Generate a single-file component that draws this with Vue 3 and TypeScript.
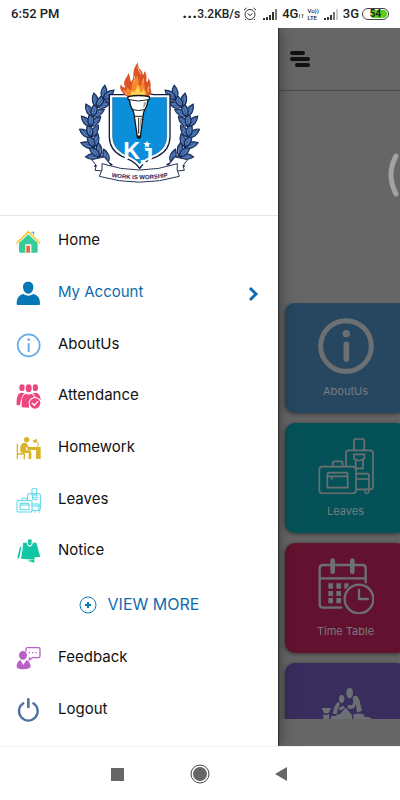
<script setup lang="ts">
interface Shape {
  d: string
  fill?: string
  stroke?: string
  width?: number
}

interface MenuItem {
  label: string
  view: string
  shapes: Shape[]
  active?: boolean
}

interface Tile {
  label?: string
  tone: string
  view: string
  shapes: Shape[]
}

const disc = (x: number, y: number, rx: number, ry: number = rx): string =>
  `M${x - rx} ${y}a${rx} ${ry} 0 1 0 ${rx * 2} 0a${rx} ${ry} 0 1 0 ${-rx * 2} 0z`

const fill = (d: string, color: string): Shape => ({ d, fill: color })
const line = (d: string, color: string, width: number): Shape => ({ d, stroke: color, width })

const mainItems: MenuItem[] = [
  {
    label: 'Home',
    view: '49 58 75 75',
    shapes: [
      fill('M58 100L86 74L114 100V125Q114 129 110 129H62Q58 129 58 125Z', '#34cc98'),
      line('M52 100L86 66L120 100', '#fcc82e', 5),
      line('M96 68L102 67V74', '#3f9fd0', 3),
      fill('M77 129V106Q77 104 79 104H93Q95 104 95 106V129Z', '#fff'),
      fill('M80 129V108H91V129Z', '#f4623c')
    ]
  },
  {
    label: 'My Account',
    view: '49 213 75 75',
    active: true,
    shapes: [
      fill('M86 215C96 215 101 221 101 230C101 242 95 251 86 251C77 251 70 242 70 230C70 221 76 215 86 215Z', '#0678b6'),
      fill('M51 282C51 264 57 256 71 252Q86 262 101 252C115 256 121 264 121 282Q121 285 118 285H54Q51 285 51 282Z', '#0678b6')
    ]
  },
  {
    label: 'AboutUs',
    view: '49 368 75 75',
    shapes: [
      line(disc(87, 405, 33), '#62ade9', 5),
      fill(disc(87, 388, 4), '#62ade9'),
      line('M87 401V423', '#62ade9', 6)
    ]
  },
  {
    label: 'Attendance',
    view: '49 43 75 75',
    shapes: [
      fill(disc(67, 54, 8, 10), '#ee477d'),
      fill(disc(107, 54, 8, 10), '#ee477d'),
      fill('M51 107C50 82 54 71 65 69L75 71Q65 78 61 107Z', '#ee477d'),
      fill('M99 71L110 69C119 72 123 81 123 91L108 84Q105 76 99 71Z', '#ee477d'),
      fill(disc(87, 56, 12, 15), '#fff'),
      fill(disc(87, 56, 9, 12), '#ee477d'),
      fill('M66 113C65 87 69 75 80 72Q87 77 94 72C102 75 106 82 107 90L90 98L88 114Z', '#ee477d'),
      fill(disc(106, 101, 19), '#fff'),
      fill(disc(106, 101, 16), '#ee477d'),
      line('M98 101L104 107L114 96', '#fff', 4)
    ]
  },
  {
    label: 'Homework',
    view: '49 198 75 75',
    shapes: [
      fill(disc(81, 209, 8), '#dab42a'),
      fill('M62 242C60 225 66 218 77 218Q83 219 87 231H97V236H83L79 229V241H91Q95 242 95 248V267H87V249H66Q62 248 62 242Z', '#dab42a'),
      line('M53 223V266M53 252H74V266', '#dab42a', 4),
      fill('M84 231H123V267H109V240H84Z', '#dab42a'),
      line('M112 231L117 224L109 212', '#dab42a', 3),
      fill('M99 212L111 206L112 216L104 219Z', '#dab42a')
    ]
  },
  {
    label: 'Leaves',
    view: '49 353 75 75',
    shapes: [
      line('M97 370V356Q97 354 99 354H109Q111 354 111 356V370M84 389V374Q84 370 88 370H118Q122 370 122 374V416Q122 420 118 420H97', '#55d5e8', 3),
      line('M96 374H112V388H99V374M99 381H109M97 401H118V420M97 407H118M106 423V426M118 423V426', '#55d5e8', 3),
      line('M55 391H94Q97 391 97 394V422Q97 425 94 425H55Q52 425 52 422V394Q52 391 55 391ZM67 391V384H83V391M62 399H88V418H62ZM62 404H88', '#55d5e8', 3)
    ]
  },
  {
    label: 'Notice',
    view: '49 508 75 75',
    shapes: [
      fill('M65 532L60 560L54 571V560L61 531Z', '#12c7a3'),
      fill('M70 519H110L122 562L105 563L104 570L64 567Q70 540 70 519Z', '#12c7a3'),
      fill('M83 573L104 570V579Z', '#12c7a3'),
      fill('M81 518H100Q98 531 90 531Q82 530 81 518Z', '#fff'),
      fill('M84 512Q91 505 97 512L95 519Q99 524 90 527Q82 524 86 519Z', '#12c7a3')
    ]
  }
]

const footItems: MenuItem[] = [
  {
    label: 'Feedback',
    view: '49 213 75 75',
    shapes: [
      line('M79 228V223Q79 218 84 218H117Q121 218 121 223V243Q121 248 116 248H98L89 255V248', '#ba5fc8', 4),
      fill('M87 231H91V235H87ZM97 231H101V235H97ZM107 231H111V235H107Z', '#ba5fc8'),
      fill(disc(70, 241, 12, 13), '#ba5fc8'),
      fill('M51 277Q51 259 62 255L71 270L80 255Q92 259 93 277Q86 283 71 283Q56 283 51 277Z', '#ba5fc8')
    ]
  },
  {
    label: 'Logout',
    view: '49 368 75 75',
    shapes: [
      line('M71 384A28 28 0 1 0 101 384', '#5172a2', 7),
      line('M86 372V395', '#5172a2', 8)
    ]
  }
]

const ink = '#6d7073'

const tiles: Tile[] = [
  {
    label: 'AboutUs',
    tone: 'blue',
    view: '142 82 168 168',
    shapes: [
      line(disc(226, 166, 76), ink, 15),
      fill(disc(227, 129, 11), ink),
      line('M227 161V205', ink, 17)
    ]
  },
  {
    label: 'Leaves',
    tone: 'teal',
    view: '142 67 168 168',
    shapes: [
      line('M250 104V75Q250 70 255 70H277Q281 70 281 75V104M226 150V112Q226 104 234 104H298Q307 104 307 112V213Q307 221 299 221H258', ink, 5),
      line('M250 116H281V127Q281 131 277 131L265 135L254 131Q250 130 250 127ZM255 133V158H277V133M258 174H288Q295 174 295 181V221M258 190H295', ink, 5),
      line(disc(289, 227, 6), ink, 4),
      line('M155 153H246Q256 153 256 163V224Q256 233 246 233H155Q146 233 146 224V163Q146 153 155 153ZM186 153V143Q186 137 192 137H210Q216 137 216 143V153M176 171H225Q231 171 231 177V216H170V177Q170 171 176 171ZM170 182H231M183 182V190', ink, 5)
    ]
  },
  {
    label: 'Time Table',
    tone: 'rose',
    view: '142 67 168 168',
    shapes: [
      line('M212 216H157Q147 216 147 206V98Q147 88 157 88H276Q285 88 285 98V140M147 128H285', ink, 7),
      line('M186 75V108M245 75V108', ink, 14),
      fill('M173 143H187V159H173ZM197 143H211V159H197ZM221 143H234V150L226 159H221ZM173 166H187V181H173ZM197 166H211V181H197ZM173 187H187V203H173ZM197 187H211V203H197Z', ink),
      line(disc(265, 190, 43), ink, 7),
      line('M265 163V190H292', ink, 7)
    ]
  },
  {
    tone: 'violet',
    view: '232 69 168 168',
    shapes: [
      fill(disc(327, 114, 10, 16), ink),
      fill(disc(303, 132, 8, 12), ink),
      fill('M243 159H271L265 172Q257 179 249 172Z', ink),
      fill('M248 177Q257 183 266 177V194H248Z', ink),
      fill('M291 142Q298 140 297 148L292 162L288 177H277Q279 152 291 142ZM295 158L308 152L313 159L297 167Z', ink),
      fill('M338 124Q351 118 357 138L364 168L349 172L345 146L341 158Q331 166 321 159V150L334 151Q341 140 336 133Z', ink),
      fill('M271 194V184Q279 182 283 184L291 178H296V194ZM296 194V179L315 158L334 180V194ZM338 194V179Q353 173 370 178V185Q388 184 397 194Z', ink)
    ]
  }
]

const stem: [number, number, number][] = [
  [112, 322, -62],
  [86, 304, -48],
  [70, 276, -28],
  [61, 246, -12],
  [60, 214, 2],
  [65, 184, 16],
  [78, 155, 32],
  [98, 132, 50]
]

const leaves = stem.flatMap(([x, y, dir]) =>
  [-44, 44, 0].map((spread) => `translate(${x} ${y}) rotate(${dir + spread})`)
)
</script>

<template>
  <div class="screen">
    <header class="status">
      <span class="clock">6:52 PM</span>
      <div class="indicators">
        <span class="speed"><b class="dots">...</b>3.2KB/s</span>
        <svg class="alarm" viewBox="0 0 14 14" aria-hidden="true">
          <circle cx="7" cy="7.5" r="5" />
          <path d="M4.5 6.5L7 8.5L9.500 6.500M1 3L3.500 1M13 3L10.500 1M3 12L2 13M11 12L12 13" />
        </svg>
        <svg class="signal" viewBox="0 0 16 12" aria-hidden="true">
          <path d="M0 10h2v2h-2zM3 9h2v3h-2zM6 7h2v5h-2zM9 4h2v8h-2z" />
          <path class="soft" d="M12 1h2v11h-2z" />
        </svg>
        <span class="net">4G<svg class="data" viewBox="0 0 6 10" aria-hidden="true"><path d="M1.500 5v4M4.500 9v-4M3.500 6h2" /></svg></span>
        <span class="volte"><span>Vo))</span><span>LTE</span></span>
        <svg class="signal" viewBox="0 0 16 12" aria-hidden="true">
          <path d="M0 10h2v2h-2zM3 9h2v3h-2zM6 7h2v5h-2z" />
          <path class="soft" d="M9 4h2v8h-2z" />
          <path class="faint" d="M12 1h2v11h-2z" />
        </svg>
        <span class="net">3G</span>
        <span class="battery"><span class="level">54</span></span>
      </div>
    </header>

    <main class="stage">
      <aside class="drawer">
        <div class="brand">
          <svg class="crest" viewBox="4 -3 405 405" role="img" aria-label="KJ school crest">
            <g v-for="side in ['left', 'right']" :key="side" :transform="side === 'right' ? 'translate(413 0) scale(-1 1)' : undefined">
              <path class="stem" d="M125 330Q58 300 60 220Q62 160 125 112" />
              <g v-for="(place, i) in leaves" :key="i" :transform="place">
                <path class="leaf" d="M0 0C-13 -11 -11 -28 0 -42C11 -28 13 -11 0 0Z" />
                <path class="vein" d="M-3 -9Q-6 -18 0 -31M4 -9Q6 -17 4 -24" />
              </g>
            </g>
            <path class="shield-edge" d="M116 119H166L176 116H238L248 119H298V246Q297 286 260 304Q220 318 207 340Q193 318 154 304Q117 286 116 246Z" />
            <path class="shield" d="M126 128H288V246Q287 279 256 296Q220 309 207 326Q193 309 158 296Q127 279 126 246Z" />
            <path class="flame-outer" d="M172 126C156 117 143 101 151 88C154 97 160 99 164 97C153 77 170 69 173 54C180 65 177 75 182 80C195 67 179 48 202 22C199 46 218 44 216 60C222 57 219 52 221 49C232 61 225 71 228 81C234 80 233 72 232 68C246 84 236 98 242 108C242 119 232 125 229 126Z" />
            <path class="flame-mid" d="M176 125C161 112 166 104 171 97C174 106 181 107 183 101C179 86 197 77 198 61C207 75 201 87 209 94C215 88 213 79 214 76C227 89 218 103 227 110C230 116 230 122 226 125Z" />
            <path class="flame-core" d="M183 125C177 117 181 110 186 107Q191 116 194 106Q201 98 199 89C209 99 205 110 213 112C219 108 217 103 217 100C226 112 224 120 219 125Z" />
            <path class="flame-line" d="M158 106Q167 110 167 120M187 83Q196 74 191 64M218 71Q220 77 216 82M234 94Q231 103 233 111M201 36Q204 48 211 57" />
            <path class="torch" d="M172 125Q204 118 236 125V132Q230 137 230 145C229 158 219 164 218 177L210 239Q211 248 205 250Q198 248 199 239L190 177C189 164 179 158 178 145Q178 137 172 132Z" />
            <path class="torch-line" d="M175 134Q204 142 233 134M187 164Q204 169 221 164M193 184H216M204 188V236" />
            <path class="torch-shade" d="M219 142H226Q225 153 218 159ZM209 188H214L207 235Z" />
            <circle class="knob" cx="205" cy="246" r="5" />
            <text class="monogram" x="158" y="311">K<tspan dy="20">J</tspan></text>
            <path class="star" d="M229 257L232 264L240 265L234 270L236 278L229 274L222 278L224 270L218 265L226 264Z" />
            <path class="ribbon" d="M63 314L101 306L121 331L96 348L73 346L77 332ZM351 314L313 306L293 331L318 348L341 346L337 332Z" />
            <path class="ribbon" d="M94 326Q207 364 320 326Q316 345 326 364Q207 399 86 364Q98 345 94 326Z" />
            <path id="motto-line" class="guide" d="M93 360Q207 386 321 360" />
            <text class="motto"><textPath href="#motto-line" startOffset="50%">WORK IS WORSHIP</textPath></text>
          </svg>
        </div>

        <nav class="menu" aria-label="Main menu">
          <a v-for="item in mainItems" :key="item.label" href="#" class="item" :class="{ active: item.active }">
            <svg class="glyph" :viewBox="item.view" aria-hidden="true">
              <path v-for="(s, i) in item.shapes" :key="i" :d="s.d" :fill="s.fill ?? 'none'" :stroke="s.stroke ?? 'none'" :stroke-width="s.width ?? 0" />
            </svg>
            <span class="label">{{ item.label }}</span>
            <svg v-if="item.active" class="chevron" viewBox="0 0 12 16" aria-hidden="true"><path d="M3 2L9 8L3 14" /></svg>
          </a>
          <button type="button" class="more">
            <svg class="plus" viewBox="0 0 18 18" aria-hidden="true">
              <circle cx="9" cy="9" r="8" />
              <path d="M9 6V12M6 9H12" />
            </svg>
            <span class="more-label">VIEW MORE</span>
          </button>
          <a v-for="item in footItems" :key="item.label" href="#" class="item">
            <svg class="glyph" :viewBox="item.view" aria-hidden="true">
              <path v-for="(s, i) in item.shapes" :key="i" :d="s.d" :fill="s.fill ?? 'none'" :stroke="s.stroke ?? 'none'" :stroke-width="s.width ?? 0" />
            </svg>
            <span class="label">{{ item.label }}</span>
          </a>
        </nav>
      </aside>

      <section class="page">
        <div class="toolbar">
          <button type="button" class="toggle" aria-label="Close menu">
            <svg viewBox="0 0 20 18" aria-hidden="true"><path d="M2 3H13M2 9H18M7 15H18" /></svg>
          </button>
        </div>
        <div class="banner">
          <svg class="arc" viewBox="0 0 12 44" aria-hidden="true"><path d="M8 3Q-2 22 8 41" /></svg>
        </div>
        <div class="tiles">
          <a v-for="tile in tiles" :key="tile.tone" href="#" class="tile" :class="tile.tone">
            <svg class="picture" :viewBox="tile.view" aria-hidden="true">
              <path v-for="(s, i) in tile.shapes" :key="i" :d="s.d" :fill="s.fill ?? 'none'" :stroke="s.stroke ?? 'none'" :stroke-width="s.width ?? 0" />
            </svg>
            <span v-if="tile.label">{{ tile.label }}</span>
          </a>
        </div>
        <div class="tabbar"></div>
      </section>
    </main>

    <footer class="keys">
      <button type="button" aria-label="Recent apps"><svg viewBox="0 0 20 20"><path d="M3 4H16V17H3Z" /></svg></button>
      <button type="button" aria-label="Home screen"><svg viewBox="0 0 20 20"><circle class="ring" cx="10" cy="10" r="9" /><circle cx="10" cy="10" r="7" /></svg></button>
      <button type="button" aria-label="Back"><svg viewBox="0 0 20 20"><path d="M3 10L15 3V17Z" /></svg></button>
    </footer>
  </div>
</template>

<style>
body {
  margin: 0;
}
</style>

<style scoped>
.screen {
  display: flex;
  flex-direction: column;
  height: 100vh;
  min-height: 640px;
  background: #fff;
  font-family: Inter, "Open Sans", sans-serif;
  color: #111;
}

button {
  border: 0;
  padding: 0;
  background: none;
  font: inherit;
  color: inherit;
}

a {
  color: inherit;
  text-decoration: none;
}

svg {
  display: block;
  flex: none;
}

.status {
  display: flex;
  flex: none;
  align-items: center;
  justify-content: space-between;
  height: 28px;
  padding: 0 11px;
  font: 500 13px/16px Roboto, sans-serif;
  color: #222;
}

.indicators {
  display: flex;
  align-items: center;
  gap: 3px;
}

.speed {
  font-size: 12px;
}

.dots {
  font-size: 17px;
  line-height: 12px;
}

.alarm {
  width: 14px;
  height: 14px;
  margin-right: 3px;
  fill: none;
  stroke: #333;
}

.signal {
  width: 16px;
  height: 12px;
  fill: #333;
}

.signal .soft {
  fill: #777;
}

.signal .faint {
  fill: #ccc;
}

.net {
  display: flex;
  align-items: center;
}

.data {
  width: 6px;
  height: 10px;
  fill: none;
  stroke: #777;
}

.volte {
  display: flex;
  flex-direction: column;
  margin-right: 2px;
  font-size: 6px;
  line-height: 7px;
}

.battery {
  box-sizing: border-box;
  width: 27px;
  height: 12px;
  padding: 1px;
  border: 1px solid #444;
  border-radius: 6px;
}

.level {
  display: block;
  border-radius: 4px;
  background: linear-gradient(90deg, #fff 36%, #56cf1c 36%);
  font-size: 10px;
  font-weight: 700;
  line-height: 8px;
  text-align: center;
}

.stage {
  display: flex;
  flex: 1;
  min-height: 0;
  overflow: hidden;
}

.drawer {
  z-index: 1;
  display: flex;
  flex: none;
  flex-direction: column;
  width: 69.5%;
  background: #fff;
  box-shadow: 0 0 1px 1px #333, 0 0 14px rgba(0, 0, 0, 0.5);
}

.brand {
  display: flex;
  flex: none;
  align-items: center;
  justify-content: center;
  height: 187px;
  border-bottom: 1px solid #e6e6e6;
}

.crest {
  width: 135px;
  height: 135px;
}

.stem {
  fill: none;
  stroke: #15264f;
  stroke-width: 5;
}

.leaf {
  fill: #3d64a0;
  stroke: #142650;
  stroke-width: 3;
}

.vein {
  fill: none;
  stroke: #6f93c6;
  stroke-width: 2;
}

.shield-edge {
  fill: #fff;
  stroke: #111d3d;
  stroke-width: 4;
}

.shield {
  fill: #0b8fdb;
  stroke: #12609b;
  stroke-width: 2;
}

.flame-outer {
  fill: #df5426;
}

.flame-mid {
  fill: #f58a2c;
}

.flame-core {
  fill: #ffd34f;
}

.flame-line {
  fill: none;
  stroke: #ffc497;
  stroke-width: 3;
}

.torch {
  fill: #fff;
  stroke: #161616;
  stroke-width: 4;
}

.torch-line {
  fill: none;
  stroke: #222;
  stroke-width: 3;
}

.torch-shade {
  fill: #999;
}

.knob {
  fill: #161616;
}

.monogram {
  fill: #fff;
  font: 700 70px "Liberation Sans", sans-serif;
}

.star {
  fill: #fff;
}

.ribbon {
  fill: #fff;
  stroke: #26345c;
  stroke-width: 3;
}

.guide {
  fill: none;
}

.motto {
  fill: #1a2557;
  font: 700 18px "Liberation Sans", sans-serif;
  text-anchor: middle;
}

.menu {
  display: flex;
  flex: 1;
  flex-direction: column;
  padding-bottom: 10px;
}

.item {
  display: flex;
  flex: 1 1 0;
  align-items: center;
  gap: 17px;
  padding: 0 19px 0 16px;
  font-size: 15px;
  line-height: 20px;
  color: #111;
}

.glyph {
  width: 25px;
  height: 25px;
}

.label {
  flex: 1;
  padding-bottom: 3px;
}

.active {
  color: #0e6cae;
}

.chevron {
  width: 12px;
  height: 16px;
  fill: none;
  stroke: #0e6cae;
  stroke-width: 3;
}

.more {
  display: flex;
  flex: none;
  align-items: center;
  justify-content: center;
  gap: 11px;
  height: 55px;
  font-size: 16px;
  line-height: 20px;
  color: #0e6cae;
}

.more-label {
  padding-bottom: 3px;
}

.plus {
  width: 18px;
  height: 18px;
  fill: none;
  stroke: #0e7ab8;
  stroke-width: 1;
}

.plus path {
  stroke-width: 2;
}

.page {
  display: flex;
  flex: 1;
  flex-direction: column;
  min-width: 0;
  overflow: hidden;
  background: #666;
}

.toolbar {
  display: flex;
  flex: none;
  align-items: center;
  height: 62px;
  padding-left: 12px;
  border-bottom: 1px solid #4c4c4c;
}

.toggle svg {
  width: 20px;
  height: 18px;
  fill: none;
  stroke: #11110f;
  stroke-width: 4;
  stroke-linecap: round;
}

.banner {
  display: flex;
  flex: none;
  justify-content: flex-end;
  height: 150px;
  padding-top: 62px;
}

.arc {
  width: 12px;
  height: 44px;
  fill: none;
  stroke: #a2a2a2;
  stroke-width: 5;
  stroke-linecap: round;
}

.tiles {
  display: grid;
  flex: 1;
  grid-template-columns: 121px;
  grid-auto-rows: 110px;
  gap: 10px;
  min-height: 0;
  padding-left: 7px;
  overflow: hidden;
}

.tile {
  display: flex;
  flex-direction: column;
  align-items: center;
  gap: 10px;
  box-sizing: border-box;
  padding-top: 15px;
  border-radius: 10px;
  box-shadow: 0 1px 5px rgba(0, 0, 0, 0.5);
  font-size: 11px;
  line-height: 14px;
  color: #777c80;
}

.picture {
  width: 56px;
  height: 56px;
}

.picture path,
.glyph path {
  stroke-linecap: round;
}

.blue {
  background: #26475f;
}

.teal {
  background: #045257;
}

.rose {
  background: #62122f;
}

.violet {
  background: #382d5c;
}

.tabbar {
  flex: none;
  height: 27px;
  background: #666;
}

.keys {
  z-index: 2;
  display: flex;
  flex: none;
  align-items: center;
  justify-content: center;
  gap: 42px;
  box-sizing: border-box;
  height: 54px;
  border-top: 1px solid #f3f3f3;
  background: #fff;
}

.keys button {
  display: flex;
  justify-content: center;
  width: 40px;
}

.keys svg {
  width: 20px;
  height: 20px;
  fill: #666;
}

.keys .ring {
  fill: none;
  stroke: #444;
  stroke-width: 1;
}
</style>
